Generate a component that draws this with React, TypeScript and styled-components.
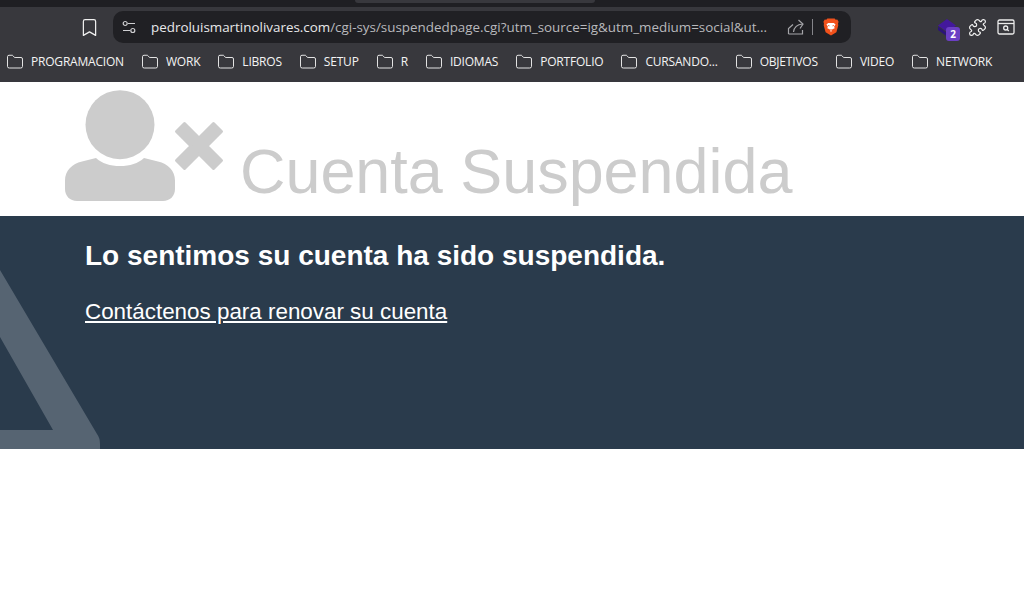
import { createGlobalStyle, styled } from 'styled-components';
import { Bookmark, Folder, Puzzle } from 'lucide-react';

const BOOKMARKS = ['PROGRAMACION', 'WORK', 'LIBROS', 'SETUP', 'R', 'IDIOMAS', 'PORTFOLIO', 'CURSANDO...', 'OBJETIVOS', 'VIDEO', 'NETWORK'];

const GlobalStyle = createGlobalStyle`
  html, body {
    margin: 0;
    height: 100%;
    background: #fff;
    overflow: hidden;
  }
  body {
    font-family: "Liberation Sans", Arial, sans-serif;
  }
`;

const Chrome = styled.div`
  height: 82px;
  background: #38383d;
  font-family: "Open Sans", "Noto Sans", sans-serif;
  color: #fff;
`;

const TabStrip = styled.div`
  height: 7px;
  background: #1f1f23;
  display: flex;
  justify-content: center;
  padding-right: 74px;
`;

const TabEdge = styled.div`
  width: 240px;
  height: 3px;
  background: #38383d;
  border-radius: 0 0 6px 6px;
`;

const Toolbar = styled.div`
  height: 32px;
  margin-top: 4px;
  display: flex;
  align-items: center;
`;

const IconSlot = styled.div`
  width: 113px;
  padding-right: 13px;
  box-sizing: border-box;
  display: flex;
  justify-content: flex-end;
  color: #f0f0f0;
`;

const AddressBar = styled.div`
  width: 738px;
  height: 32px;
  border-radius: 10px;
  background: #202024;
  display: flex;
  align-items: center;
  padding-left: 9px;
  box-sizing: border-box;
`;

const Url = styled.div`
  margin-left: 15px;
  width: 636px;
  font-size: 13.4px;
  color: #b9b9bd;
  white-space: nowrap;
  b {
    color: #e8e8ea;
    font-weight: 400;
  }
`;

const Divider = styled.div`
  width: 1px;
  height: 16px;
  background: #85858a;
  margin: 0 10px 0 8px;
`;

const Extensions = styled.div`
  display: flex;
  align-items: center;
  margin-left: 87px;
  gap: 10px;
`;

const BadgeIcon = styled.div`
  position: relative;
  width: 20px;
  height: 22px;
  svg {
    display: block;
    margin-top: 3px;
  }
`;

const Badge = styled.span`
  position: absolute;
  left: 8px;
  top: 11px;
  width: 14px;
  height: 14px;
  border-radius: 3px;
  background: #6b3fc4;
  font: 700 10px/14px "Open Sans", sans-serif;
  text-align: center;
  color: #fff;
`;

const BookmarkBar = styled.div`
  height: 37px;
  display: flex;
  align-items: center;
  padding-left: 6px;
  gap: 17px;
`;

const BookmarkItem = styled.div`
  display: flex;
  align-items: center;
  gap: 7px;
  font-size: 12px;
  letter-spacing: -0.2px;
  white-space: nowrap;
  color: #f4f4f4;
`;

const Header = styled.header`
  height: 134px;
  box-sizing: border-box;
  padding: 8px 0 0 64px;
  display: flex;
  align-items: flex-start;
  background: #fff;
`;

const Title = styled.h1`
  margin: 44px 0 0 16px;
  font-size: 62.9px;
  line-height: 74px;
  font-weight: 400;
  color: #ccc;
  white-space: nowrap;
`;

const Band = styled.section`
  position: relative;
  height: 233px;
  box-sizing: border-box;
  padding: 23px 85px 0;
  background: #2a3b4c;
  color: #fff;
  overflow: hidden;
`;

const Watermark = styled.svg`
  position: absolute;
  left: 0;
  top: 0;
`;

const Heading = styled.h2`
  position: relative;
  margin: 0;
  font-size: 28px;
  line-height: 34px;
  font-weight: 700;
`;

const ContactLink = styled.a`
  position: relative;
  display: inline-block;
  margin-top: 24px;
  font-size: 22.4px;
  line-height: 30px;
  color: #fff;
  text-decoration: underline;
`;

function SiteSettingsIcon() {
  return (
    <svg width="14" height="14" viewBox="0 0 14 14" fill="none" stroke="#cfcfd2" strokeWidth="1.2">
      <circle cx="3.2" cy="3.5" r="2" />
      <path d="M6 3.500h7M1 10.500h7" />
      <circle cx="10.800" cy="10.500" r="2" />
    </svg>
  );
}

function ShareIcon() {
  return (
    <svg width="17" height="16" viewBox="0 0 17 16" fill="none" stroke="#a5a5a9" strokeWidth="1.2">
      <path d="M1.500 15V9.500L6 5.500M1.500 15H15.500V11" />
      <path d="M6.500 13C7 9 9.500 5.500 15.500 5" />
      <path d="M11.500 1l4.500 4-3 4.500" />
    </svg>
  );
}

function BraveIcon() {
  return (
    <svg width="16" height="18" viewBox="0 0 16 19">
      <path d="M4.200 0.500h7.600l1.200 1.400 1.600-.2L16 4l-.6 2.200.3 1.400-2 7.400L8 18.600 2.300 15 .3 7.600l.3-1.400L0 4l1.400-2.300 1.600.2z" fill="#f1511b" />
      <path d="M5 5.200h6l1.800 1.600-1.500 2.200.6 1.800-2.400 1-1.500 3.200-1.500-3.200-2.400-1 .6-1.800L3.200 6.800z" fill="#fff" />
      <path d="M6.400 8.300 5 7.900M9.600 8.300 11 7.900M6.700 12.600h2.600" stroke="#f1511b" strokeWidth="1" />
    </svg>
  );
}

function StackIcon() {
  return (
    <svg width="20" height="18" viewBox="0 0 20 18">
      <path d="M0 7.500 9 14l7-5v3.500L9 17.500 0 11z" fill="#2c1478" />
      <path d="M9 0l9 6.500-9 6.500-9-6.500z" fill="#43189c" />
    </svg>
  );
}

function WindowSearchIcon() {
  return (
    <svg width="18" height="16" viewBox="0 0 18 16" fill="none" stroke="#ececec" strokeWidth="1.3">
      <rect x="1" y="1" width="16" height="14" rx="1.500" />
      <path d="M1 4.500h16" />
      <circle cx="8.700" cy="9" r="2" />
      <path d="M10.200 10.500l1.600 1.500" />
    </svg>
  );
}

function UserBlockedIcon() {
  return (
    <svg width="160" height="112" viewBox="0 0 160 112" fill="#ccc">
      <circle cx="56" cy="34.700" r="34.500" />
      <path d="M32 68c6 5.500 14 8 24 8s18-2.500 24-8l14 3.500c10 2.500 17 9 17 19V99c0 7-5 12-12 12H13C6 111 1 106 1 99v-8.500C1 80.500 8 74 18 71.500z" />
      <polygon
        points="135,48 149.500,33.500 157.500,41.500 143,56 157.500,70.500 149.500,78.500 135,64 120.500,78.500 112.500,70.500 127,56 112.500,41.500 120.500,33.500"
        stroke="#ccc"
        strokeWidth="3"
        strokeLinejoin="round"
      />
    </svg>
  );
}

export default function App() {
  return (
    <>
      <GlobalStyle />
      <Chrome>
        <TabStrip>
          <TabEdge />
        </TabStrip>
        <Toolbar>
          <IconSlot>
            <Bookmark size={21} strokeWidth={1.4} />
          </IconSlot>
          <AddressBar>
            <SiteSettingsIcon />
            <Url>
              <b>pedroluismartinolivares.com</b>/cgi-sys/suspendedpage.cgi?utm_source=ig&amp;utm_medium=social&amp;ut...
            </Url>
            <ShareIcon />
            <Divider />
            <BraveIcon />
          </AddressBar>
          <Extensions>
            <BadgeIcon>
              <StackIcon />
              <Badge>2</Badge>
            </BadgeIcon>
            <Puzzle size={19} strokeWidth={1.5} color="#f0f0f0" />
            <WindowSearchIcon />
          </Extensions>
        </Toolbar>
        <BookmarkBar>
          {BOOKMARKS.map((name) => (
            <BookmarkItem key={name}>
              <Folder size={18} strokeWidth={1.3} color="#e8e8e8" />
              {name}
            </BookmarkItem>
          ))}
        </BookmarkBar>
      </Chrome>
      <Header>
        <UserBlockedIcon />
        <Title>Cuenta Suspendida</Title>
      </Header>
      <Band>
        <Watermark width="100" height="233" viewBox="0 0 100 233">
          <path d="M0 54 97 218Q100 222 100 228V233H0V214H53L0 121Z" fill="#566472" />
        </Watermark>
        <Heading>Lo sentimos su cuenta ha sido suspendida.</Heading>
        <ContactLink href="#">Contáctenos para renovar su cuenta</ContactLink>
      </Band>
    </>
  );
}
